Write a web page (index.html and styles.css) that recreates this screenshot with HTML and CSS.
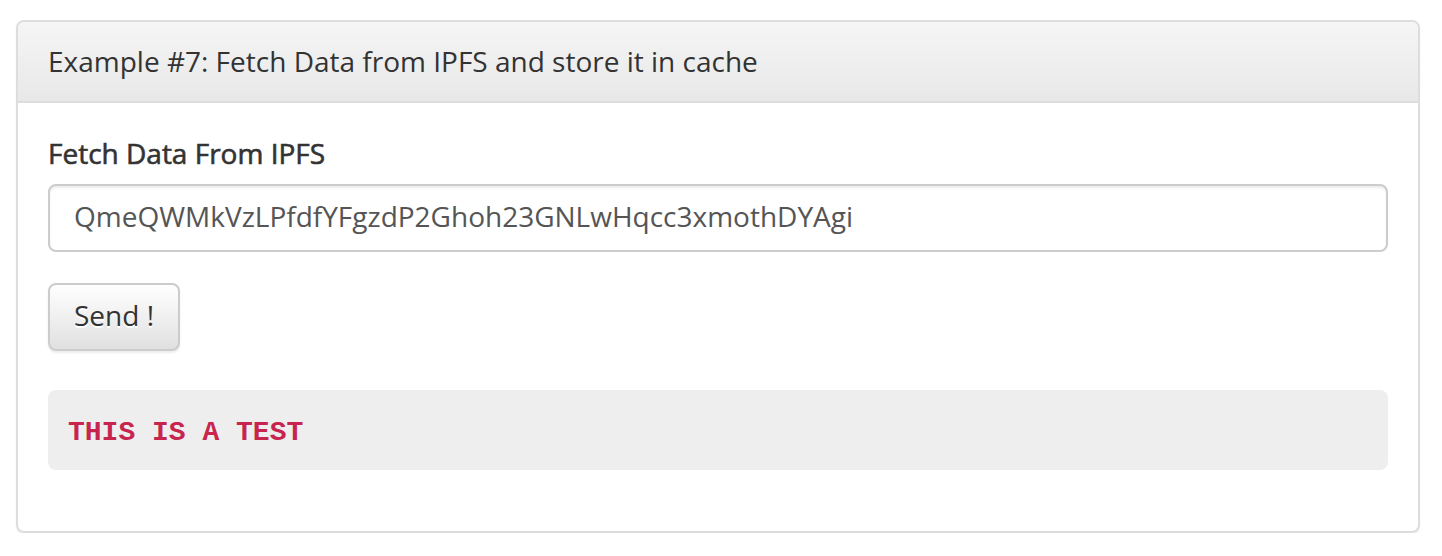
FILE: index.html
```html
<!DOCTYPE html>
<html>
<head>
<meta charset="utf-8">
<link rel="stylesheet" href="styles.css">
</head>
<body>
<div class="page">
  <div class="panel">
    <div class="panel-heading">
      <h3 class="panel-title">Example #7: Fetch Data from IPFS and store it in cache</h3>
    </div>
    <div class="panel-body">
      <div class="form-group">
        <label class="label">Fetch Data From IPFS</label>
        <input class="form-control" type="text" value="QmeQWMkVzLPfdfYFgzdP2Ghoh23GNLwHqcc3xmothDYAgi">
      </div>
      <button class="btn">Send !</button>
      <pre class="result">THIS IS A TEST</pre>
    </div>
  </div>
</div>
</body>
</html>
```
FILE: styles.css
```css
* { box-sizing: border-box; }
html, body { margin: 0; padding: 0; background: #fff; }
body {
  font-family: "Open Sans", "Liberation Sans", sans-serif;
  color: #333;
}
.page {
  padding: 20px 22px 0 16px;
}
.panel {
  border: 2px solid #ddd;
  border-radius: 8px;
  background: #fff;
  box-shadow: 0 2px 2px rgba(0,0,0,0.05);
}
.panel-heading {
  padding: 20px 30px;
  height: 81px;
  border-bottom: 2px solid #ddd;
  border-radius: 6px 6px 0 0;
  background: linear-gradient(#f5f5f5, #e8e8e8);
  display: flex;
  align-items: center;
}
.panel-title {
  margin: 0;
  font-size: 28px;
  font-weight: 400;
  line-height: 1.2;
  color: #333;
}
.panel-body {
  padding: 30px;
}
.form-group {
  margin-bottom: 31px;
}
.label {
  display: inline-block;
  font-size: 28px;
  font-weight: 400;
  -webkit-text-stroke: 0.6px #333;
  line-height: 40px;
  margin-bottom: 11px;
  color: #333;
}
.form-control {
  display: block;
  width: 100%;
  height: 68px;
  padding: 10px 24px 14px;
  font-family: "Open Sans", "Liberation Sans", sans-serif;
  font-size: 28px;
  color: #555;
  background: #fff;
  border: 2px solid #ccc;
  border-radius: 8px;
  box-shadow: inset 0 2px 2px rgba(0,0,0,0.075);
  outline: none;
}
.btn {
  display: block;
  height: 68px;
  padding: 0 24px 4px;
  font-family: "Open Sans", "Liberation Sans", sans-serif;
  font-size: 28px;
  color: #333;
  background: linear-gradient(#fff, #e0e0e0);
  border: 2px solid #ccc;
  border-radius: 8px;
  text-shadow: 0 2px 0 #fff;
  box-shadow: inset 0 2px 0 rgba(255,255,255,0.15), 0 2px 2px rgba(0,0,0,0.075);
  margin: 0 0 39px 0;
}
.result {
  margin: 0 0 31px 0;
  padding: 23px 20px 17px;
  background: #eee;
  border-radius: 8px;
  font-family: "Liberation Mono", "Courier New", monospace;
  font-weight: 700;
  font-size: 28px;
  line-height: 40px;
  color: #c7254e;
}
```
